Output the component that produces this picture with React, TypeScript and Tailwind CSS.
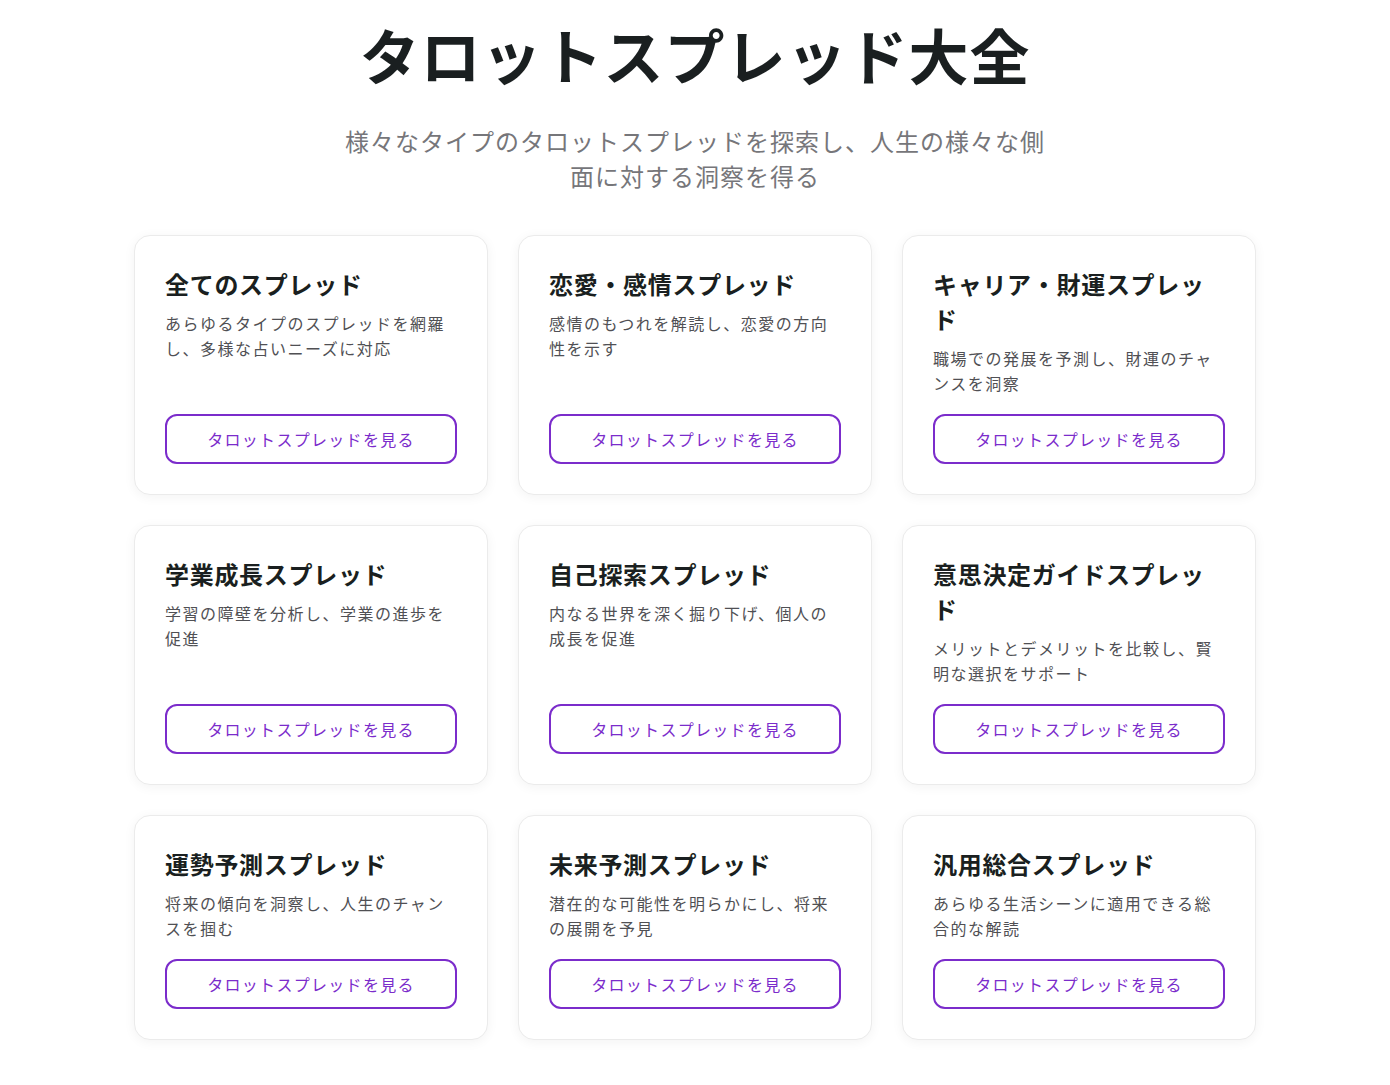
const spreads = [
  { id: 1, title: "全てのスプレッド", desc: "あらゆるタイプのスプレッドを網羅し、多様な占いニーズに対応" },
  { id: 2, title: "恋愛・感情スプレッド", desc: "感情のもつれを解読し、恋愛の方向性を示す" },
  { id: 3, title: "キャリア・財運スプレッド", desc: "職場での発展を予測し、財運のチャンスを洞察" },
  { id: 4, title: "学業成長スプレッド", desc: "学習の障壁を分析し、学業の進歩を促進" },
  { id: 5, title: "自己探索スプレッド", desc: "内なる世界を深く掘り下げ、個人の成長を促進" },
  { id: 6, title: "意思決定ガイドスプレッド", desc: "メリットとデメリットを比較し、賢明な選択をサポート" },
  { id: 7, title: "運勢予測スプレッド", desc: "将来の傾向を洞察し、人生のチャンスを掴む" },
  { id: 8, title: "未来予測スプレッド", desc: "潜在的な可能性を明らかにし、将来の展開を予見" },
  { id: 9, title: "汎用総合スプレッド", desc: "あらゆる生活シーンに適用できる総合的な解読" },
];

const App = () => {
  return (
    <div className="w-full min-h-screen bg-white font-['Noto_Sans_CJK_JP','Noto_Sans',sans-serif]">
      <div className="max-w-[1122px] mx-auto pt-[18px] pb-10">
        <h1 className="text-center text-[60px] leading-[72px] font-bold tracking-[1px] text-[#1a1f20]">
          タロットスプレッド大全
        </h1>
        <p className="max-w-[710px] mx-auto mt-[33px] text-center text-2xl leading-[35px] tracking-[1px] text-[#76767a]">
          様々なタイプのタロットスプレッドを探索し、人生の様々な側面に対する洞察を得る
        </p>
        <div className="grid grid-cols-3 gap-[30px] mt-[42px]">
          {spreads.map(s => (
            <div key={s.id} className="flex flex-col bg-white border border-[#ebebeb] rounded-2xl p-[30px] shadow-[0_2px_12px_rgba(0,0,0,0.05)]">
              <h2 className="text-2xl leading-[35px] font-bold tracking-[0.7px] text-[#1a1f20] mb-2.5">{s.title}</h2>
              <p className="flex-1 text-base leading-[25px] tracking-[1.5px] text-[#505054]">{s.desc}</p>
              <button className="mt-[18px] h-[50px] w-full rounded-xl border-2 border-[#7b2ccb] bg-white text-base tracking-[1.3px] text-[#7b2ccb]">
                タロットスプレッドを見る
              </button>
            </div>
          ))}
        </div>
      </div>
    </div>
  );
};

export default App;
